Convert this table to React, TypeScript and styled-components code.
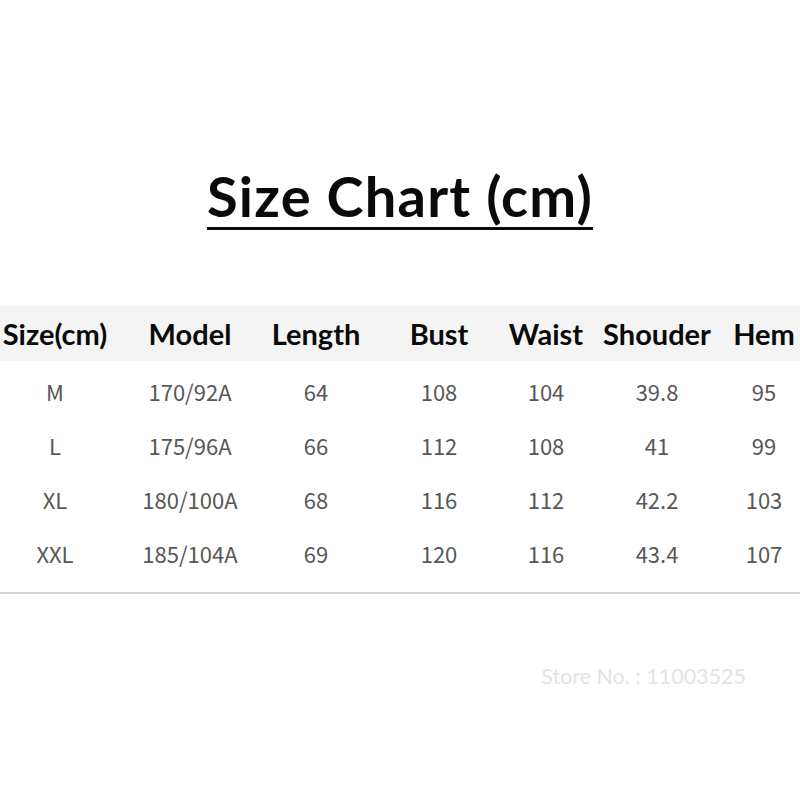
import React from "react";
import styled, { createGlobalStyle } from "styled-components";

const Global = createGlobalStyle`
  html, body { margin: 0; padding: 0; background: #ffffff; }
  body { width: 800px; height: 800px; overflow: hidden; }
`;

const Page = styled.div`
  width: 800px;
  height: 800px;
  display: flex;
  flex-direction: column;
  align-items: stretch;
  background: #fff;
`;

const TitleWrap = styled.div`
  display: flex;
  justify-content: center;
  padding-top: 166px;
  height: 140px;
  box-sizing: border-box;
`;

const Title = styled.h1`
  margin: 0;
  font-family: Lato, "Open Sans", sans-serif;
  font-weight: 700;
  font-size: 56px;
  letter-spacing: 1.2px;
  line-height: 60px;
  color: #0a0a0a;
  text-decoration: underline;
  text-decoration-thickness: 3px;
  text-underline-offset: 10px;
`;

const cols = [110, 160, 92, 154, 60, 162, 52];
const Row = styled.div<{ $header?: boolean; $h: number }>`
  display: grid;
  grid-template-columns: ${cols.map((c) => `${c}px`).join(" ")};
  height: ${(p) => p.$h}px;
  background: ${(p) => (p.$header ? "#f4f4f4" : "transparent")};
`;

const Cell = styled.div<{ $header?: boolean }>`
  display: flex;
  justify-content: center;
  align-items: center;
  white-space: nowrap;
  font-family: ${(p) =>
    p.$header ? `Lato, "Open Sans", sans-serif` : `"Noto Sans CJK SC", "Noto Sans", sans-serif`};
  font-weight: ${(p) => (p.$header ? 700 : 400)};
  font-size: ${(p) => (p.$header ? "29px" : "22px")};
  color: ${(p) => (p.$header ? "#0a0a0a" : "#575757")};
`;

const Table = styled.div`
  margin-top: 140px;
  display: flex;
  flex-direction: column;
`;

const Body = styled.div`
  display: flex;
  flex-direction: column;
  padding-top: 3px;
  border-bottom: 2px solid #d6d6d6;
  padding-bottom: 12px;
`;

const Footer = styled.div`
  display: flex;
  justify-content: flex-end;
  padding-right: 54px;
  padding-top: 69px;
`;

const Store = styled.span`
  font-family: Lato, "Open Sans", sans-serif;
  font-size: 21.5px;
  color: #e3e3e3;
`;

const headers = ["Size(cm)", "Model", "Length", "Bust", "Waist", "Shouder", "Hem"];
const rows = [
  ["M", "170/92A", "64", "108", "104", "39.8", "95"],
  ["L", "175/96A", "66", "112", "108", "41", "99"],
  ["XL", "180/100A", "68", "116", "112", "42.2", "103"],
  ["XXL", "185/104A", "69", "120", "116", "43.4", "107"],
];

export default function App() {
  return (
    <>
      <Global />
      <Page>
        <TitleWrap>
          <Title>Size Chart (cm)</Title>
        </TitleWrap>
        <Table>
          <Row $header $h={55}>
            {headers.map((h) => (
              <Cell key={h} $header>
                {h}
              </Cell>
            ))}
          </Row>
          <Body>
            {rows.map((r) => (
              <Row key={r[0]} $h={54}>
                {r.map((v, i) => (
                  <Cell key={i}>{v}</Cell>
                ))}
              </Row>
            ))}
          </Body>
        </Table>
        <Footer>
          <Store>Store No. : 11003525</Store>
        </Footer>
      </Page>
    </>
  );
}
